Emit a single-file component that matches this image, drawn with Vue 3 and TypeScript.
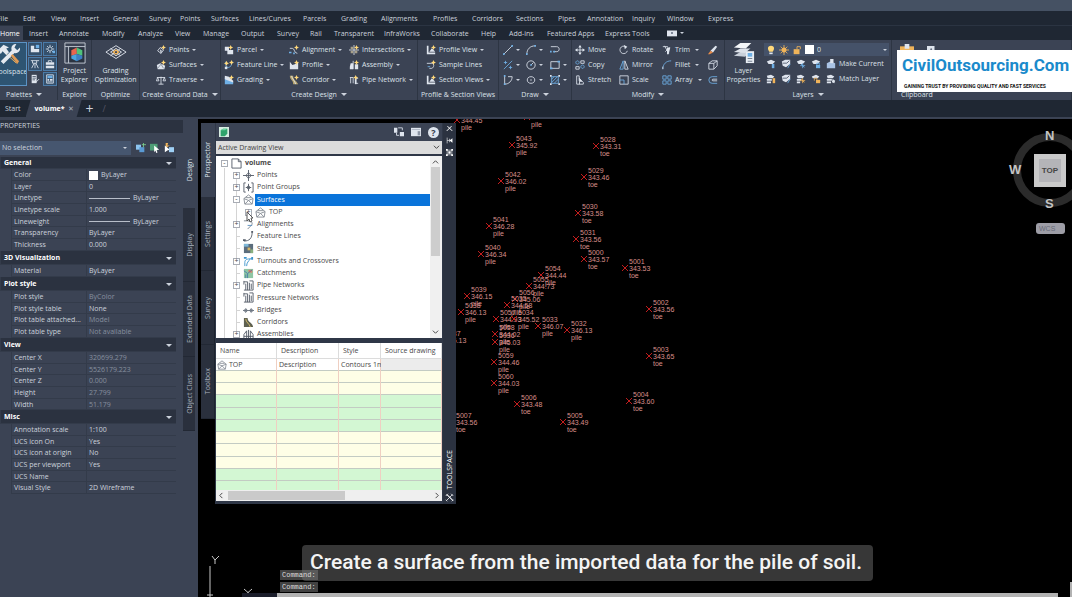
<script setup lang="ts">
import { h, ref } from 'vue'

type Shape = [mode: 'f' | 's', color: string, d: string]

const W = '#dfe5ee'
const B = '#6fb0e6'
const O = '#f0b45a'
const G = '#555d69'
const spark = (x: number, y: number): Shape => ['f', '#ffd87a', `M${x} ${y - 3}l1 2 2 1-2 1-1 2-1-2-2-1 2-1z`]

const icons: Record<string, Shape[]> = {
  // tool palettes
  tp: [['f', W, 'M1 2h4v8h-4z M5 6h6v4H5z'], ['f', B, 'M7 1h4v4H7z']],
  gear: [['s', W, 'M6 3.5a2.5 2.5 0 1 0 .01 0 M6 1v2 M6 9v2 M1 6h2 M9 6h2 M2.5 2.5l1.4 1.4 M8.1 8.1l1.4 1.4 M9.5 2.5L8.1 3.9 M3.9 8.1L2.5 9.5'], ['f', B, 'M9 8h3v3H9z']],
  survey: [['s', W, 'M1 2h10 M3 2v3h5V2 M5 5L2 11 M6 5v6 M7 5l3 6']],
  box: [['f', W, 'M1 4h10v3H1z M1 8h10v3H1z'], ['s', W, 'M4 4V2h4v2']],
  sheet: [['f', W, 'M2 1h6v10H2z'], ['s', '#4a5468', 'M3 3h4 M3 5h4 M3 7h3'], ['s', W, 'M7 10l4-4']],
  calc: [['s', W, 'M2 1h8v10H2z'], ['f', B, 'M3 2h6v3H3z'], ['f', W, 'M3 6h2v2H3z M6 6h3v2H6z M3 9h6v1H3z']],
  // ground data
  points: [['s', W, 'M5 3l4 3-3 4-4-3z'], ['f', W, 'M5 5l2 2-1 4-1-4z'], spark(9, 3)],
  surfaces: [['f', W, 'M1 6l4-2 6 3-1 4H2z'], ['s', '#7d8797', 'M2 10l4-5 3 5'], spark(9, 3)],
  traverse: [['s', W, 'M6 2v9 M3 11h6 M1 3h10 M2 3L0.5 7h3z M10 3L8.5 7h3z']],
  parcel: [['f', W, 'M1 2h5v4h5v5H4V7H1z'], spark(8, 3)],
  feature: [['s', B, 'M2 2c0 4 0 7 3 7s4-3 5-7'], ['f', W, 'M1 8h3v3H1z'], spark(9, 3), spark(3, 4)],
  grading: [['f', B, 'M1 3l10 5v3H1z'], ['f', W, 'M1 1l5 1 5 5v2L1 5z'], spark(9, 3)],
  alignment: [['s', W, 'M1 4h3c3 0 2 6 6 6'], ['f', B, 'M0 8h3v2H0z M5 9h2v2H5z'], spark(9, 3)],
  profile: [['f', W, 'M1 2l3 4 3-1 4-3v9H1z'], spark(9, 3)],
  corridor: [['f', '#b9a66e', 'M1 1h4c0 5 3 5 6 10H5C5 6 1 6 1 1z'], ['s', W, 'M3 1c1 4 4 6 5 10'], spark(9, 3)],
  inter: [['s', W, 'M0 6h12 M6 0v12'], ['f', '#a7a08a', 'M2 2h3v3H2z M7 7h3v3H7z M2 7h3v3H2z'], spark(9, 3)],
  assembly: [['f', W, 'M2 4h3v7H1V8z M7 5h4v6H7z'], ['s', W, 'M5 1v10'], spark(9, 3)],
  pipe: [['s', W, 'M1 3h4v7 M2 3v7 M11 4H8v6h3'], ['f', W, 'M7 4h2v7H7z'], spark(8, 3)],
  pview: [['f', W, 'M1 1v10h10V9H3V1z M4 8l3-4 3 3 1 1z'], spark(9, 3)],
  sample: [['s', W, 'M1 4h6c3 0 3 5 0 6H4'], ['s', B, 'M2 8h3'], spark(9, 3)],
  // draw
  line: [['s', W, 'M1 11L11 1'], ['f', B, 'M0 10h2v2H0z M10 0h2v2h-2z']],
  arc: [['s', W, 'M1 11C1 5 5 1 11 1'], ['f', B, 'M0 10h2v2H0z M10 0h2v2h-2z']],
  pline: [['s', W, 'M1 2h7c4 0 4 6 0 6H4'], ['f', B, 'M0 7h2v2H0z M4 7h2v2H4z']],
  xline: [['s', B, 'M1 11L11 1 M3 1v4 M1 3h4 M9 7v4 M7 9h4']],
  circle: [['s', W, 'M6 1a5 5 0 1 0 .01 0 M6 6l3-3'], ['f', B, 'M5 5h2v2H5z']],
  rect: [['s', W, 'M1 2h10v8H1z'], ['f', B, 'M0 9h3v2H0z M9 1h3v2H9z']],
  poly: [['s', W, 'M2 1v10c5 0 9-4 9-9H6'], ['f', B, 'M1 0h2v2H1z M1 10h2v2H1z']],
  ellipse: [['s', W, 'M6 2c-6 0-6 8 0 8s6-8 0-8 M5 6h2']],
  hatch: [['s', B, 'M2 2h8v8H2z M2 5l3-3 M2 9l7-7 M5 10l5-5'], ['f', W, 'M0 0h2v2H0z M10 0h2v2h-2z M0 10h2v2H0z M10 10h2v2h-2z']],
  // modify
  move: [['s', W, 'M6 1v10 M1 6h10'], ['f', W, 'M6 0l2 3H4z M6 12l2-3H4z M0 6l3-2v4z M12 6L9 4v4z']],
  copy: [['s', B, 'M3 1a2 2 0 1 0 .01 0 M9 6a2 2 0 1 0 .01 0'], ['s', W, 'M7 1h4v3H7z M1 8h4v3H1z']],
  stretch: [['s', W, 'M2 1v10 M2 1h3v6 M2 11h8V9L5 4'], ['f', W, 'M5 3l4 5H6v3H5z']],
  rotate: [['s', W, 'M8 2a4.5 4.5 0 1 0 2 5'], ['f', W, 'M6 0l4 2-3 3z']],
  mirror: [['s', B, 'M5 1v10H1z'], ['s', W, 'M7 1v10h4z']],
  scale: [['s', W, 'M1 1h10v10H1z'], ['s', B, 'M1 6h5v5']],
  trim: [['s', W, 'M1 2h6 M3 1l5 9 M9 3l-5 5'], ['f', W, 'M6 3h4L8 11H6z']],
  fillet: [['s', B, 'M1 11C1 5 5 1 11 1'], ['s', W, 'M1 11V8']],
  array: [['s', B, 'M1 1h4v4H1z M7 1h4v4H7z M1 7h4v4H1z M7 7h4v4H7z']],
  erase: [['f', W, 'M9 1l2 1-5 7-3-2z'], ['f', '#e98c4a', 'M3 7l3 2-4 2H0z']],
  explode: [['s', W, 'M1 4h6v7H1z M1 4l4-3h6v6L7 11 M7 4l4-3']],
  offset: [['s', B, 'M11 2H5a4 4 0 0 0 0 8h6'], ['s', W, 'M11 5H6a1 1 0 0 0 0 2h5']],
  // layers
  bulb: [['f', '#ffd87a', 'M6 1c5 0 4 5 2 7H4C2 6 1 1 6 1z'], ['f', W, 'M4 9h4v2H4z']],
  sun: [['f', O, 'M6 3a3 3 0 1 0 .01 0z'], ['s', O, 'M6 0v12 M0 6h12 M2 2l8 8 M10 2l-8 8']],
  lock: [['f', O, 'M2 5h7v6H2z'], ['s', O, 'M6 5V2h4v3']],
  loff: [['f', W, 'M1 3l5-2 5 2-3 3H3z'], ['f', B, 'M7 6h3v5H7z']],
  liso: [['f', W, 'M1 3l4-2h6v5l-5 4-4-2z'], ['s', B, 'M8 11l3-5'], ['s', '#4a5468', 'M2 5h5l3-3']],
  lfrz: [['f', W, 'M1 3l5-2 5 2-3 3H3z'], ['s', B, 'M8 5v6 M5 8h6 M6 6l4 4']],
  llock: [['f', W, 'M1 3l5-2 5 2-3 3H3z'], ['f', B, 'M6 7h5v4H6z'], ['s', B, 'M7 7V5h3v2']],
  lcur: [['f', '#a9c3e4', 'M1 5l4-2 6 2v6H1z'], ['f', W, 'M5 0h4v5H5z']],
  lon: [['f', W, 'M1 2l5-1 4 2-2 2H2z M1 6h6v2H1z M1 9h5v2H1z'], ['f', O, 'M8 5h3v6H8z']],
  lthaw: [['f', W, 'M1 2l5-1 4 2-2 2H2z M1 6h5v2H1z M1 9h4v2H1z'], ['s', O, 'M8 5v6 M5 8h6 M6 6l4 4']],
  lunl: [['f', W, 'M1 3l5-2 4 2-2 2H2z'], ['f', O, 'M6 7h5v4H6z'], ['s', O, 'M4 8V5h3v2']],
  lmatch: [['f', W, 'M1 2l5-1 4 2-2 2H2z M1 6h6v2H1z M1 9h5v2H1z M8 6l3 2-1 3-3-1z']],
  clip: [['f', O, 'M0 2h12v10H0z'], ['f', W, 'M4 0h4v4H4z M6 6h6v6H6z']],
  cut: [['f', W, 'M0 0h9v12H0z'], ['s', '#4a5468', 'M3 8l2-5 2 5']],
  camera: [['f', W, 'M0 3h12v7H0z'], ['f', '#4a5468', 'M5 5h2v2H5z']],
  // properties
  quick: [['f', '#8cc4ef', 'M0 2h6v6H0z'], ['f', '#5a9ad4', 'M4 5h6v6H4z'], ['s', '#7bd08c', 'M9 0v5 M7 2h5']],
  pick: [['f', '#4e9d76', 'M0 1h9v8H0z'], ['f', '#fff', 'M5 3l6 5-3 .5 1 3-1.5.5-1-3L5 11z']],
  select: [['f', O, 'M2 0h3L4 3h3L2 6z'], ['f', '#fff', 'M1 3l6 5-3 1-3 2z'], ['f', '#9fd0f5', 'M6 5h6v6H6z']],
  // toolspace header
  green: [['f', '#d8ede2', 'M0 0h12v12H0z'], ['f', '#2fa36b', 'M2 4l3-2h5v6l-3 3H2z'], ['f', '#6bd6a0', 'M2 4l3-2h5L7 4z']],
  panels: [['f', W, 'M0 1h4v6H0z M7 6h5v5H7z'], ['s', W, 'M5 1h5v3 M3 7v3h3']],
  list: [['f', W, 'M0 1h12v10H0z'], ['s', '#aab2c0', 'M1 3h10'], ['f', '#8a93a3', 'M8 5h3v5H8z']],
  pin: [['s', '#fff', 'M2 1v10 M2 6h4 M6 3v6'], ['f', '#fff', 'M11 2v8L6 6z']],
  opts: [['s', '#fff', 'M2 2h8v8H2z'], ['f', '#fff', 'M4 4h4v4H4z M0 0h3v3H0z M9 0h3v3H9z M0 9h3v3H0z M9 9h3v3H9z']],
  close: [['s', '#fff', 'M2 2l8 8 M10 2l-8 8 M3 2l8 8 M9 2l-8 8']],
  tools: [['s', '#fff', 'M2 2l8 8 M10 2l-8 8 M3 2l8 8 M1 4l3-3 M8 1l3 3 M1 9l2 2 M9 11l2-2']],
  // tree
  dwg: [['s', G, 'M1 1h7l3 3v7H1z M8 1v3h3']],
  tPoint: [['s', G, 'M6 0v12 M0 6h12 M6 3l3 3-3 3-3-3z']],
  tGroup: [['s', G, 'M3 1H1v10h2 M9 1h2v10H9 M6 2v8 M3 6h6 M6 4l2 2-2 2-2-2z']],
  tSurf: [['s', '#858c95', 'M1 5l5-4 5 4-1 6H2z M1 5l5 2 5-2 M6 7l-4 4 M6 7l4 4 M3 4h6']],
  tAlign: [['s', '#7b8490', 'M1 2h4c5 0 6 3 4 5l-4 4'], ['s', '#5a8fc0', 'M5 7h5']],
  tFeat: [['s', G, 'M1 11c6 0 9-3 9-10'], ['f', G, 'M0 9h3v2H0z M9 0h2v2H9z']],
  tSite: [['f', '#5b6d7d', 'M1 1h10v10H1z'], ['f', '#d7b563', 'M5 5h3v3H5z'], ['f', '#7fb8d8', 'M1 1h5v3H1z'], ['f', '#8ab07e', 'M8 7h3v4H8z']],
  tTurn: [['s', '#3b93cc', 'M2 11V7c0-3 2-4 8-4 M4 11c0-4 2-5 4-8'], ['f', '#3b93cc', 'M1 1h3v2H1z M9 1h2v3H9z']],
  tCatch: [['f', '#8fc6a4', 'M1 1h10v10H1z'], ['f', '#e27b62', 'M6 2h4v3H6z'], ['s', '#4a7fa8', 'M1 3l4 3v5 M5 6l5-4 M3 11V7']],
  tPipe: [['s', G, 'M1 2h4v9 M3 4v7 M1 11h10 M7 1h4v10 M7 3v8 M9 4v6 M1 1v4']],
  tBridge: [['s', '#6b7480', 'M0 6h12 M3 4v4 M9 4v4 M1 6l2-2 2 2-2 2z M7 6l2-2 2 2-2 2z']],
  tCorr: [['f', '#5e6050', 'M1 1h4c0 5 6 5 6 10H1z'], ['s', '#d8c06a', 'M3 2c0 4 4 5 5 9']],
  tAsm: [['s', G, 'M1 11V6l3-4v9 M6 1v10 M8 2l3 4v5H8z M1 8h10']],
}

const bigIcons: Record<string, Shape[]> = {
  hammer: [
    ['s', O, 'M8 11L20 22'],
    ['f', '#e4e9f0', 'M0 8l6-6 6 3-3 1 3 4-3 3-4-4-2 3z M20 1a5 5 0 0 0-5 7L3 20l3 3L18 11a5 5 0 0 0 6-6l-3 3-3-3z'],
    ['f', '#e09a55', 'M14 14l2-2 7 8-2 3z'],
  ],
  explorer: [
    ['s', '#c7ced8', 'M1 1h22v22H1z M1 5h22 M5 5v18'],
    ['f', '#2b3340', 'M6 6h16v16H6z'],
    ['f', '#e8654f', 'M8 9l6-3v7l-6 2z'],
    ['f', '#4fc27a', 'M14 6l6 3v6l-6-2z'],
    ['f', '#4aa3e0', 'M8 15l6-2v8l-6-3z'],
    ['f', '#3c7fc4', 'M20 15l-6-2v8l6-3z'],
  ],
  optimize: [
    ['s', W, 'M12 4l11 7-11 7-11-7z M6 7l11 8 M17 7L6 15 M12 7l6 4-6 4-6-4z'],
    ['f', O, 'M12 8l4 3-4 3-4-3z'],
    ['f', '#3b4354', 'M11 10h2v2h-2z'],
  ],
  layers: [
    ['f', '#c9d0da', 'M1 15l7-4h11l-6 5z'],
    ['f', '#dde2ea', 'M1 11l7-4h11l-6 5z'],
    ['f', '#f4f6f9', 'M1 6l7-5h12l-6 6z'],
    ['f', '#e8edf3', 'M14 10h9v13h-9z'],
    ['f', B, 'M16 12h5v4h-5z'],
    ['s', '#6a7689', 'M16 18h5 M16 21h5'],
  ],
}

const draw = (set: Record<string, Shape[]>, box: string) => {
  const c = (p: { n: string }) =>
    h('svg', { viewBox: box, 'aria-hidden': 'true' },
      set[p.n].map(([m, c, d]) => h('path', m === 'f' ? { d, fill: c } : { d, fill: 'none', stroke: c })))
  c.props = ['n']
  return c
}
const Ic = draw(icons, '0 0 12 12')
const Big = draw(bigIcons, '0 0 24 24')

const menus = ['File', 'Edit', 'View', 'Insert', 'General', 'Survey', 'Points', 'Surfaces', 'Lines/Curves', 'Parcels',
  'Grading', 'Alignments', 'Profiles', 'Corridors', 'Sections', 'Pipes', 'Annotation', 'Inquiry', 'Window', 'Express']
const tabs = ['Home', 'Insert', 'Annotate', 'Modify', 'Analyze', 'View', 'Manage', 'Output', 'Survey', 'Rail',
  'Transparent', 'InfraWorks', 'Collaborate', 'Help', 'Add-ins', 'Featured Apps', 'Express Tools']

type Cmd = { i: string; t?: string; c?: boolean }
const palettes = ['tp', 'gear', 'survey', 'box', 'sheet', 'calc']
const ground: Cmd[] = [{ i: 'points', t: 'Points', c: true }, { i: 'surfaces', t: 'Surfaces', c: true }, { i: 'traverse', t: 'Traverse', c: true }]
const design: Cmd[] = [
  { i: 'parcel', t: 'Parcel', c: true }, { i: 'alignment', t: 'Alignment', c: true }, { i: 'inter', t: 'Intersections', c: true },
  { i: 'feature', t: 'Feature Line', c: true }, { i: 'profile', t: 'Profile', c: true }, { i: 'assembly', t: 'Assembly', c: true },
  { i: 'grading', t: 'Grading', c: true }, { i: 'corridor', t: 'Corridor', c: true }, { i: 'pipe', t: 'Pipe Network', c: true },
]
const views: Cmd[] = [{ i: 'pview', t: 'Profile View', c: true }, { i: 'sample', t: 'Sample Lines' }, { i: 'pview', t: 'Section Views', c: true }]
const drawing: Cmd[] = [
  { i: 'line', c: true }, { i: 'arc', c: true }, { i: 'pline' },
  { i: 'xline', c: true }, { i: 'circle', c: true }, { i: 'rect', c: true },
  { i: 'poly', c: true }, { i: 'ellipse', c: true }, { i: 'hatch', c: true },
]
const modify: Cmd[] = [
  { i: 'move', t: 'Move' }, { i: 'rotate', t: 'Rotate' }, { i: 'trim', t: 'Trim', c: true }, { i: 'erase' },
  { i: 'copy', t: 'Copy' }, { i: 'mirror', t: 'Mirror' }, { i: 'fillet', t: 'Fillet', c: true }, { i: 'explode' },
  { i: 'stretch', t: 'Stretch' }, { i: 'scale', t: 'Scale' }, { i: 'array', t: 'Array', c: true }, { i: 'offset' },
]
const layerCmds: Cmd[] = [
  { i: 'loff' }, { i: 'liso' }, { i: 'lfrz' }, { i: 'llock' }, { i: 'lcur', t: 'Make Current' },
  { i: 'lon' }, { i: 'liso' }, { i: 'lthaw' }, { i: 'lunl' }, { i: 'lmatch', t: 'Match Layer' },
]

type Prop = { k: string; v: string; kind?: 'swatch' | 'line'; dim?: boolean }
const sections: { title: string; rows: Prop[] }[] = [
  { title: 'General', rows: [
    { k: 'Color', v: 'ByLayer', kind: 'swatch' }, { k: 'Layer', v: '0' }, { k: 'Linetype', v: 'ByLayer', kind: 'line' },
    { k: 'Linetype scale', v: '1.000' }, { k: 'Lineweight', v: 'ByLayer', kind: 'line' },
    { k: 'Transparency', v: 'ByLayer' }, { k: 'Thickness', v: '0.000' }] },
  { title: '3D Visualization', rows: [{ k: 'Material', v: 'ByLayer' }] },
  { title: 'Plot style', rows: [
    { k: 'Plot style', v: 'ByColor', dim: true }, { k: 'Plot style table', v: 'None' },
    { k: 'Plot table attached...', v: 'Model', dim: true }, { k: 'Plot table type', v: 'Not available', dim: true }] },
  { title: 'View', rows: [
    { k: 'Center X', v: '320699.279', dim: true }, { k: 'Center Y', v: '5526179.223', dim: true },
    { k: 'Center Z', v: '0.000', dim: true }, { k: 'Height', v: '27.799', dim: true }, { k: 'Width', v: '51.179', dim: true }] },
  { title: 'Misc', rows: [
    { k: 'Annotation scale', v: '1:100' }, { k: 'UCS icon On', v: 'Yes' }, { k: 'UCS icon at origin', v: 'No' },
    { k: 'UCS per viewport', v: 'Yes' }, { k: 'UCS Name', v: '' }, { k: 'Visual Style', v: '2D Wireframe' }] },
]
const propTabs = ['Design', 'Display', 'Extended Data', 'Object Class']
const spaceTabs = ['Prospector', 'Settings', 'Survey', 'Toolbox']

const tree: { t: string; i: string; l: number; x: string }[] = [
  { t: 'volume', i: 'dwg', l: 0, x: '-' }, { t: 'Points', i: 'tPoint', l: 1, x: '+' }, { t: 'Point Groups', i: 'tGroup', l: 1, x: '+' },
  { t: 'Surfaces', i: 'tSurf', l: 1, x: '-' }, { t: 'TOP', i: 'tSurf', l: 2, x: '+' }, { t: 'Alignments', i: 'tAlign', l: 1, x: '+' },
  { t: 'Feature Lines', i: 'tFeat', l: 1, x: '' }, { t: 'Sites', i: 'tSite', l: 1, x: '' },
  { t: 'Turnouts and Crossovers', i: 'tTurn', l: 1, x: '+' }, { t: 'Catchments', i: 'tCatch', l: 1, x: '' },
  { t: 'Pipe Networks', i: 'tPipe', l: 1, x: '+' }, { t: 'Pressure Networks', i: 'tPipe', l: 1, x: '' },
  { t: 'Bridges', i: 'tBridge', l: 1, x: '' }, { t: 'Corridors', i: 'tCorr', l: 1, x: '' }, { t: 'Assemblies', i: 'tAsm', l: 1, x: '+' },
]
const selected = ref('Surfaces')
const bands = ['cream', 'cream', 'green', 'green', 'green', 'cream', 'cream', 'cream', 'green', 'green']

// survey points: marker x, marker y, number, elevation, code
const points: [number, number, string, string, string][] = [
  [259, 1, '', '344.45', 'pile'], [329, -2, '', '', 'pile'],
  [314, 26, '5043', '345.92', 'pile'], [398, 27, '5028', '343.31', 'toe'], [303, 62, '5042', '346.02', 'pile'],
  [386, 58, '5029', '343.46', 'toe'], [380, 94, '5030', '343.58', 'toe'], [291, 107, '5041', '346.28', 'pile'],
  [378, 120, '5031', '343.56', 'toe'], [283, 135, '5040', '346.34', 'pile'], [386, 140, '5000', '343.57', 'toe'],
  [427, 149, '5001', '343.53', 'toe'], [343, 156, '5054', '344.44', 'pile'], [331, 167, '5055', '344.73', 'pile'],
  [269, 177, '5039', '346.15', 'pile'], [263, 193, '5038', '346.13', 'pile'], [317, 180, '5056', '345.06', 'pile'],
  [309, 186, '5035', '344.58', 'pile'], [298, 200, '5057', '344.93', 'pile'], [316, 200, '5034', '345.52', 'pile'],
  [340, 207, '5033', '346.07', 'pile'], [369, 211, '5032', '346.13', 'pile'], [297, 215, '5058', '344.02', 'pile'],
  [297, 223, '5036', '345.03', 'pile'], [296, 243, '5059', '344.46', 'pile'], [296, 264, '5060', '344.03', 'pile'],
  [319, 285, '5006', '343.48', 'toe'], [365, 303, '5005', '343.49', 'toe'], [431, 282, '5004', '343.60', 'toe'],
  [451, 237, '5003', '343.65', 'toe'], [451, 190, '5002', '343.56', 'toe'], [254, 303, '5007', '343.56', 'toe'],
  [243, 221, '5037', '346.13', ''],
]
</script>

<template>
  <div class="app">
    <div class="titlebar"></div>
    <nav class="menubar">
      <button v-for="m in menus" :key="m">{{ m }}</button>
    </nav>
    <nav class="tabbar">
      <button v-for="(t, n) in tabs" :key="t" :class="{ on: n === 0 }">{{ t }}</button>
      <button class="cam" aria-label="Ribbon display"><Ic n="camera" class="ic" /><i class="caret"></i></button>
    </nav>

    <section class="ribbon">
      <div class="panel">
        <div class="palettes">
          <button class="big on"><Big n="hammer" class="bi" /><span>Toolspace</span></button>
          <div class="pal-grid">
            <button v-for="(p, n) in palettes" :key="p" :class="{ lit: n !== 4 }" :aria-label="p"><Ic :n="p" class="ic" /></button>
          </div>
        </div>
        <div class="label pal-label">Palettes <i class="caret"></i></div>
      </div>
      <div class="panel">
        <button class="big"><Big n="explorer" class="bi" /><span>Project<br>Explorer</span></button>
        <div class="label">Explore</div>
      </div>
      <div class="panel">
        <button class="big"><Big n="optimize" class="bi" /><span>Grading<br>Optimization</span></button>
        <div class="label">Optimize</div>
      </div>
      <div class="panel">
        <div class="cmds ground">
          <button v-for="c in ground" :key="c.t"><Ic :n="c.i" class="ic" />{{ c.t }}<i class="caret"></i></button>
        </div>
        <div class="label">Create Ground Data <i class="caret"></i></div>
      </div>
      <div class="panel">
        <div class="cmds design">
          <button v-for="c in design" :key="c.t"><Ic :n="c.i" class="ic" />{{ c.t }}<i class="caret"></i></button>
        </div>
        <div class="label">Create Design <i class="caret"></i></div>
      </div>
      <div class="panel">
        <div class="cmds views">
          <button v-for="c in views" :key="c.t"><Ic :n="c.i" class="ic" />{{ c.t }}<i v-if="c.c" class="caret"></i></button>
        </div>
        <div class="label">Profile &amp; Section Views</div>
      </div>
      <div class="panel">
        <div class="cmds draw">
          <button v-for="c in drawing" :key="c.i" :aria-label="c.i"><Ic :n="c.i" class="ic" /><i v-if="c.c" class="caret"></i></button>
        </div>
        <div class="label">Draw <i class="caret"></i></div>
      </div>
      <div class="panel">
        <div class="cmds modify">
          <button v-for="c in modify" :key="c.i" :aria-label="c.t || c.i"><Ic :n="c.i" class="ic" />{{ c.t }}<i v-if="c.c" class="caret"></i></button>
        </div>
        <div class="label">Modify <i class="caret"></i></div>
      </div>
      <div class="panel">
        <div class="layers">
          <button class="big"><Big n="layers" class="bi" /><span>Layer<br>Properties</span></button>
          <div>
            <div class="layer-combo">
              <Ic n="bulb" class="ic" /><Ic n="sun" class="ic" /><Ic n="lock" class="ic" /><b class="swatch"></b>
              <select aria-label="Current layer"><option>0</option></select><i class="caret"></i>
            </div>
            <div class="cmds layer-cmds">
              <button v-for="(c, n) in layerCmds" :key="n" :aria-label="c.t || c.i"><Ic :n="c.i" class="ic" />{{ c.t }}</button>
            </div>
          </div>
        </div>
        <div class="label">Layers <i class="caret"></i></div>
      </div>
      <div class="panel">
        <div class="clipboard">
          <button aria-label="Paste"><Ic n="clip" class="clip" /></button>
          <button aria-label="Cut"><Ic n="cut" class="ic" /></button>
        </div>
        <div class="label start">Clipboard</div>
      </div>
      <a class="brand" href="#">
        <strong>CivilOutsourcing.Com</strong>
        <small>GAINING TRUST BY PROVIDING QUALITY AND FAST SERVICES</small>
      </a>
    </section>

    <nav class="docs">
      <button class="start">Start</button>
      <button class="doc">volume* <span>✕</span></button>
      <button class="add" aria-label="New drawing">+</button>
      <span class="slash">/</span>
    </nav>

    <main>
      <aside class="props">
        <div class="props-main">
          <h2>PROPERTIES</h2>
          <div class="selrow">
            <div class="combo">
              <select aria-label="Selection"><option>No selection</option></select><i class="caret"></i>
            </div>
            <button aria-label="Quick select"><Ic n="quick" class="ic" /></button>
            <button aria-label="Pick objects"><Ic n="pick" class="ic" /></button>
            <button aria-label="Select objects"><Ic n="select" class="ic" /></button>
          </div>
          <table>
            <colgroup><col class="gut"><col class="key"><col></colgroup>
            <tbody v-for="s in sections" :key="s.title">
              <tr class="head"><th colspan="3"><div>{{ s.title }}<i class="caret"></i></div></th></tr>
              <tr v-for="r in s.rows" :key="r.k">
                <td class="gutter"></td>
                <th scope="row">{{ r.k }}</th>
                <td :class="{ dim: r.dim }">
                  <div><b v-if="r.kind === 'swatch'" class="swatch"></b><b v-if="r.kind === 'line'" class="rule"></b>{{ r.v }}</div>
                </td>
              </tr>
            </tbody>
          </table>
        </div>
        <div class="vtabs prop-tabs">
          <button v-for="(t, n) in propTabs" :key="t" :class="{ on: n === 0 }"><span>{{ t }}</span></button>
        </div>
      </aside>

      <div class="canvas">
        <svg class="plot" aria-label="Survey points">
          <g v-for="(p, n) in points" :key="n" :transform="`translate(${p[0]} ${p[1]})`">
            <path d="M-3-3l6 6M3-3l-6 6" />
            <text x="4" y="-4">{{ p[2] }}</text>
            <text x="4" y="3">{{ p[3] }}</text>
            <text x="4" y="10">{{ p[4] }}</text>
          </g>
          <g class="ucs">
            <path d="M12 447v40M14 437l3 4 4-4M17 441v4M46 470l8 7M54 470l-8 7M9 476h6" />
          </g>
        </svg>

        <div class="cube">
          <svg viewBox="0 0 74 74" aria-hidden="true"><circle cx="37" cy="37" r="33" /></svg>
          <span class="n">N</span><span class="w">W</span><span class="s">S</span>
          <button>TOP</button>
        </div>
        <button class="wcs">WCS</button>

        <section class="space">
          <div class="vtabs space-tabs">
            <button v-for="(t, n) in spaceTabs" :key="t" :class="{ on: n === 0 }"><span>{{ t }}</span></button>
          </div>
          <div class="space-body">
            <header>
              <Ic n="green" class="ic" />
              <button class="first" aria-label="Panels"><Ic n="panels" class="ic" /></button>
              <button aria-label="Preview"><Ic n="list" class="ic" /></button>
              <button class="help" aria-label="Help">?</button>
            </header>
            <div class="view-combo">
              <select aria-label="Drawing view"><option>Active Drawing View</option></select>
              <svg viewBox="0 0 8 8" aria-hidden="true"><path d="M1 2l3 3 3-3" /></svg>
            </div>
            <div class="tree-box">
              <ul>
                <li v-for="r in tree" :key="r.t" :class="['l' + r.l, { sel: r.t === selected }]" @click="selected = r.t">
                  <span :class="r.x ? 'exp' : 'leaf'">{{ r.x }}</span>
                  <Ic :n="r.i" class="ic" />
                  <span class="name">{{ r.t }}</span>
                </li>
              </ul>
              <div class="vbar">
                <svg viewBox="0 0 8 8"><path d="M1 5l3-3 3 3" /></svg>
                <b></b>
                <svg viewBox="0 0 8 8"><path d="M1 3l3 3 3-3" /></svg>
              </div>
              <svg class="pointer" viewBox="0 0 8 12" aria-hidden="true"><path d="M1 1v9l2-2 1 3 2-1-1-3h2z" /></svg>
            </div>
            <div class="grid-box">
              <div class="grid-view">
                <table>
                  <colgroup><col class="c1"><col class="c2"><col class="c3"><col></colgroup>
                  <thead><tr><th>Name</th><th>Description</th><th>Style</th><th>Source drawing</th></tr></thead>
                  <tbody>
                    <tr><td><div><Ic n="tSurf" class="ic" />TOP</div></td><td>Description</td><td>Contours 1m</td><td class="off"></td></tr>
                    <tr v-for="(b, n) in bands" :key="n" :class="b"><td></td><td></td><td></td><td></td></tr>
                  </tbody>
                </table>
              </div>
              <div class="hbar">
                <svg viewBox="0 0 8 8"><path d="M5 1L2 4l3 3" /></svg>
                <b></b>
                <svg viewBox="0 0 8 8"><path d="M3 1l3 3-3 3" /></svg>
              </div>
            </div>
          </div>
          <div class="space-side">
            <button aria-label="Close"><Ic n="close" class="ic" /></button>
            <button aria-label="Auto-hide"><Ic n="pin" class="ic" /></button>
            <button aria-label="Options"><Ic n="opts" class="ic" /></button>
            <span class="vtitle">TOOLSPACE</span>
            <Ic n="tools" class="tool" />
          </div>
        </section>

        <p class="caption">Create a surface from the imported data for the pile of soil.</p>
        <div class="history"><span>Command:</span><span>Command:</span></div>
        <div class="cmdline"><b></b><input aria-label="Command line"></div>
        <div class="edge"></div>
      </div>
    </main>
  </div>
</template>

<style>
body { margin: 0; background: #000; }
</style>

<style scoped>
.app {
  display: flex;
  flex-direction: column;
  height: 100vh;
  min-width: 1000px;
  overflow: hidden;
  background: #3b4354;
  color: #ccd2dc;
  font: 7px/11px "Open Sans", "Noto Sans", sans-serif;
}
button, select, input {
  margin: 0;
  padding: 0;
  border: 0;
  background: none;
  color: inherit;
  font: inherit;
  text-align: left;
  white-space: nowrap;
}
select { appearance: none; flex: 1; min-width: 0; }
.ic { width: 10px; height: 10px; flex: none; display: block; }
.caret {
  flex: none;
  display: inline-block;
  border: 2px solid transparent;
  border-top-color: #ccd2dc;
  border-bottom: 0;
}
.label .caret, .head .caret { border-width: 3px 3px 0; }
.swatch { width: 9px; height: 9px; background: #fff; flex: none; }

.titlebar { height: 11px; background: #455163; flex: none; }
.menubar, .tabbar { display: grid; flex: none; background: #1f2733; }
.menubar {
  height: 14px;
  grid-template-columns: 23px 28px 29px 33px 36px 31px 31px 38px 54px 38px 40px 52px 39px 44px 42px 29px 45px 35px 41px 40px;
}
.menubar button:first-child { text-indent: -3px; }
.tabbar {
  height: 15px;
  border-top: 1px solid #2b3442;
  box-sizing: border-box;
  grid-template-columns: 29px 30px 43px 36px 37px 28px 38px 36px 33px 24px 50px 47px 50px 28px 38px 58px 62px 20px;
}
.tabbar .on { background: #3b4354; width: 23px; color: #fff; }
.cam { display: flex; align-items: center; gap: 3px; }

.ribbon {
  position: relative;
  flex: none;
  height: 60px;
  display: grid;
  grid-template-columns: 58px 34px 48px 81px 197px 81px 73px 153px 167px 1fr;
  color: #dde2ea;
}
.panel {
  display: flex;
  flex-direction: column;
  justify-content: space-between;
  border-right: 1px solid #2d3543;
  padding-top: 2px;
  min-width: 0;
  overflow: hidden;
}
.label { display: flex; justify-content: center; align-items: center; gap: 4px; height: 12px; white-space: nowrap; }
.label.start { justify-content: flex-start; padding-left: 9px; }
.pal-label { padding-right: 9px; }
.big { display: flex; flex-direction: column; align-items: center; text-align: center; line-height: 9px; width: 100%; }
.big span { text-align: center; }
.bi { width: 22px; height: 22px; margin-bottom: 2px; }
.palettes { display: flex; gap: 1px; }
.palettes .big { width: 27px; height: 44px; background: #2e5472; border: 1px solid #5b92c4; border-left: 0; box-sizing: border-box; overflow: hidden; }
.palettes .big .bi { margin-left: -8px; }
.palettes .big span { margin-left: -4px; }
.pal-grid { display: grid; grid-template-columns: 14px 14px; gap: 1px; }
.pal-grid button { display: grid; place-items: center; height: 14px; box-sizing: border-box; }
.pal-grid .lit { background: #35506c; border: 1px solid #4b7ba8; }

.cmds { display: grid; grid-auto-rows: 15px; }
.cmds button { display: flex; align-items: center; gap: 3px; }
.ground { padding-left: 16px; }
.design { padding-left: 3px; grid-template-columns: 65px 60px 1fr; }
.views { padding-left: 8px; }
.draw { padding-left: 4px; grid-template-columns: 23px 24px 1fr; }
.modify { padding-left: 3px; grid-template-columns: 44px 43px 46px 1fr; }
.modify .caret { margin-left: 2px; }
.layers { display: flex; gap: 2px; }
.layers .big { width: 37px; flex: none; }
.layer-combo { display: flex; align-items: center; gap: 3px; width: 121px; height: 13px; margin-top: 1px; padding: 0 2px; background: #455269; }
.layer-cmds { grid-template-columns: 15px 15px 15px 15px 1fr; padding-left: 2px; }
.clipboard { display: flex; gap: 13px; padding: 2px 0 0 8px; }
.clip { width: 14px; height: 14px; display: block; }
.brand {
  position: absolute;
  right: 0;
  top: 10px;
  height: 42px;
  width: 170px;
  padding-left: 5px;
  background: #fff;
  text-decoration: none;
  white-space: nowrap;
  font-family: Roboto, "Liberation Sans", sans-serif;
}
.brand strong { display: block; color: #1a8acb; font-size: 17px; line-height: 31px; font-weight: 700; }
.brand small { display: block; color: #111; font-size: 5px; line-height: 10px; font-weight: 700; padding-left: 2px; }

.docs { display: flex; align-items: center; flex: none; height: 17px; background: #1f2733; }
.docs .start { padding: 0 5px 0 5px; }
.doc {
  align-self: stretch;
  width: 56px;
  padding-left: 9px;
  background: #3b4354;
  clip-path: polygon(5px 0, 100% 0, 51px 100%, 0 100%);
  color: #fff;
  font-weight: 700;
}
.doc span { padding-left: 2px; color: #aab2c0; font-weight: 400; }
.add { padding-left: 4px; font-size: 14px; }
.slash { padding-left: 9px; color: #556; font-size: 9px; }

main { flex: 1; display: flex; min-height: 0; border-top: 2px solid #3b4354; }
.props { width: 195px; padding-right: 3px; flex: none; display: flex; }
.props-main { width: 183px; }
.props h2 { margin: 1px 0 7px; height: 13px; background: #2b3240; font-size: 7px; line-height: 12px; font-weight: 400; }
.selrow { display: flex; gap: 4px; align-items: center; height: 15px; margin-bottom: 2px; }
.combo { display: flex; align-items: center; width: 125px; height: 14px; padding: 0 4px 0 2px; background: #46566f; margin-right: 1px; }
.props table { width: 176px; table-layout: fixed; border-collapse: collapse; }
.gut { width: 11px; }
.key { width: 75px; }
.props tr { height: 12px; }
.props tr:nth-child(3n) { height: 11px; }
.props tbody + tbody .head { height: 14px; }
.props th, .props td { padding: 0 0 0 3px; text-align: left; font-weight: 400; line-height: 10px; white-space: nowrap; overflow: hidden; box-shadow: inset 0 -1px #333b4a, inset 1px 0 #333b4a; }
.props td.gutter { box-shadow: none; }
.props .head th { padding: 0 4px; background: #2b3240; color: #fff; font-weight: 700; }
.props th div { display: flex; justify-content: space-between; align-items: center; }
.props td div { display: flex; align-items: center; gap: 3px; height: 10px; }
.rule { width: 41px; height: 1px; background: #b8bec9; }
.props .dim { color: #87909f; }

.vtabs { display: flex; flex-direction: column; color: #a9b0bd; }
.vtabs button { display: flex; align-items: center; justify-content: center; background: #2a303d; border-bottom: 1px solid #222834; box-sizing: border-box; }
.vtabs span, .vtitle { writing-mode: vertical-rl; transform: rotate(180deg); }
.vtabs .on { background: #3b4354; color: #dde2ea; border-color: #3b4354; }
.prop-tabs { width: 12px; padding-top: 14px; }
.prop-tabs button { height: 75px; }
.prop-tabs button:nth-child(even) { height: 74px; }

.canvas { position: relative; flex: 1; background: #000; overflow: hidden; }
.plot { position: absolute; inset: 0; width: 100%; height: 100%; }
.plot path { fill: none; stroke: #c21d1d; }
.plot text { fill: #d98f8b; font: 7px "Liberation Sans", sans-serif; }
.plot .ucs path { stroke: #c8c8c8; }
.cube { position: absolute; right: -15px; top: 14px; width: 74px; height: 74px; display: grid; place-items: center; font: 700 13px/14px "Liberation Sans", sans-serif; color: #c4c4c4; }
.cube svg { position: absolute; inset: 0; }
.cube circle { fill: none; stroke: #2b2b2b; stroke-width: 8; }
.cube button { width: 32px; height: 33px; background: #b4b4b8; border: 5px solid #c9c9c9; box-sizing: border-box; color: #444; font: 700 8px "Liberation Sans", sans-serif; text-align: center; }
.cube span { position: absolute; }
.cube .n { top: -4px; left: 32px; }
.cube .w { left: -4px; top: 30px; }
.cube .s { left: 32px; bottom: -4px; }
.wcs { position: absolute; right: 7px; top: 104px; width: 29px; height: 11px; border-radius: 3px; background: #9d9da6; color: #666a78; padding-left: 3px; font: 7px "Liberation Sans", sans-serif; }

.space { position: absolute; left: 3px; top: 4px; display: grid; grid-template-columns: 14px 228px 13px; }
.space-tabs button { height: 74px; border-right: 1px solid #1d232e; }
.space-body { background: #2f3747; padding: 0 1px 3px; }
.space header { display: flex; align-items: center; gap: 7px; height: 18px; padding: 0 3px; background: #3b4354; }
.space header .first { margin-left: auto; }
.help { width: 11px; height: 11px; border-radius: 50%; background: #dfe5ee; color: #333b4a; font-weight: 700; font-size: 9px; line-height: 11px; text-align: center; }
.view-combo { display: flex; align-items: center; height: 13px; background: #dcdcdc; color: #444; padding: 0 2px; margin-bottom: 2px; }
.space svg { overflow: visible; }
.view-combo svg, .vbar svg, .hbar svg { width: 7px; height: 7px; fill: none; stroke: #333; flex: none; }
.tree-box { position: relative; display: flex; height: 182px; background: #fff; color: #484848; overflow: hidden; margin-bottom: 5px; }
.tree-box ul {
  flex: 1;
  list-style: none;
  margin: 0;
  padding: 1px 0 0;
  background:
    linear-gradient(#d4d4d4, #d4d4d4) 8px 12px / 1px 170px no-repeat,
    linear-gradient(#d4d4d4, #d4d4d4) 20px 18px / 1px 164px no-repeat;
}
.tree-box li { display: flex; align-items: center; height: 12px; padding-left: 5px; }
.tree-box li:nth-child(4n) { height: 13px; }
.tree-box .l1 { padding-left: 17px; }
.tree-box .l2 { padding-left: 29px; }
.tree-box .ic { width: 11px; height: 11px; margin: 0 1px 0 3px; }
.exp { width: 5px; height: 5px; border: 1px solid #a9adb5; background: #fff; font-size: 7px; line-height: 4px; text-align: center; }
.leaf { width: 3px; height: 1px; margin-left: 4px; background: #d4d4d4; }
.name { flex: 1; padding-left: 2px; line-height: 12px; }
.l0 .name { font-weight: 700; }
.sel .name { background: #0a74da; color: #fff; }
.vbar { width: 12px; background: #f0f0f0; display: flex; flex-direction: column; align-items: center; padding: 3px 2px 3px 0; box-sizing: border-box; }
.vbar b { width: 9px; height: 89px; background: #cdcdcd; margin: 1px 0 auto; }
.pointer { position: absolute; left: 30px; top: 55px; width: 8px; height: 12px; }
.pointer path { fill: #fff; stroke: #555; }

.grid-box { background: #fff; color: #484848; }
.grid-view { height: 147px; overflow: hidden; }
.grid-box table { width: 100%; table-layout: fixed; border-collapse: collapse; }
.c1 { width: 61px; }
.c2 { width: 62px; }
.c3 { width: 42px; }
.grid-box tr { height: 12px; }
.grid-box tbody tr:nth-child(4n) { height: 13px; }
.grid-box thead tr { height: 16px; }
.grid-box th, .grid-box td { padding: 0 0 0 2px; text-align: left; font-weight: 400; line-height: 10px; white-space: nowrap; overflow: hidden; }
.grid-box th { padding-left: 4px; box-shadow: inset -1px -1px #dcdcdc; }
.grid-box td { box-shadow: inset -1px 0 #efcfc2, inset 0 -1px #c3cbc3; }
.grid-box td div { display: flex; align-items: center; gap: 2px; height: 10px; margin-left: -1px; }
.off { background: #ececec; }
.cream { background: #fefee6; }
.green { background: #d3f7d3; }
.hbar { display: flex; align-items: center; height: 11px; padding: 0 2px; background: #efefef; }
.hbar b { width: 117px; height: 9px; margin: 0 auto 0 3px; background: #cacaca; }
.space-side { display: flex; flex-direction: column; align-items: center; background: #2b3240; padding: 1px 0 2px; gap: 4px; color: #fff; }
.space-side .ic { width: 7px; height: 7px; margin-top: 1px; }
.vtitle { margin-top: auto; line-height: 12px; }
.tool { width: 9px; height: 9px; flex: none; }

.caption { position: absolute; left: 104px; bottom: 16px; margin: 0; padding: 0 11px 0 8px; height: 36px; background: #373737; border-radius: 4px; color: #f4f4f4; font: 500 21px/34px Roboto, sans-serif; white-space: nowrap; }
.history { position: absolute; left: 82px; bottom: 5px; display: flex; flex-direction: column; gap: 2px; color: #ddd; font: 7px/10px "Liberation Mono", monospace; }
.history span { padding: 0 2px; background: rgba(120, 120, 120, .55); }
.cmdline { position: absolute; left: 44px; right: 14px; bottom: 0; height: 4px; display: flex; }
.cmdline b { width: 35px; background: #1a1d2a; }
.cmdline input { flex: 1; min-width: 0; background: #b2b2b2; }
.edge { position: absolute; right: 0; bottom: 0; width: 2px; height: 15px; background: #b2b2b2; }
</style>
